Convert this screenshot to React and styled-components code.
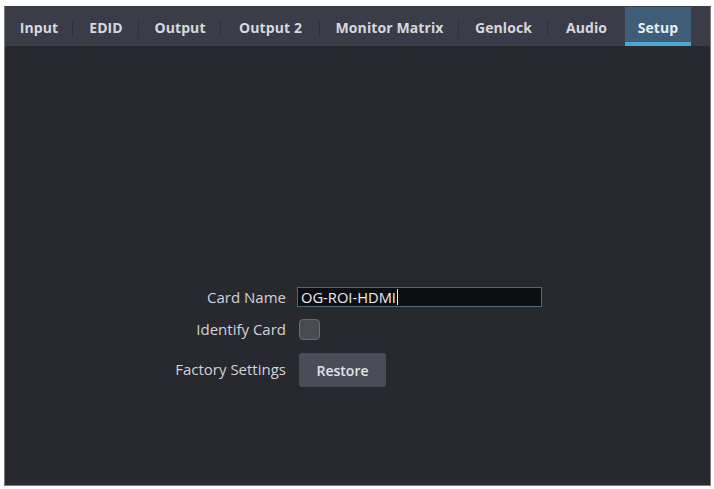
import React from "react";
import styled, { createGlobalStyle } from "styled-components";

const Global = createGlobalStyle`
  html, body { margin: 0; padding: 0; background: #ffffff; }
  body { font-family: "Open Sans", "DejaVu Sans", sans-serif; }
`;

const Frame = styled.div`
  margin: 6px 0 0 4px;
  width: 707px;
  height: 480px;
  box-sizing: border-box;
  border: 1px solid #7a7b80;
  border-top-color: #3b3e48;
  background: #28282f;
  display: flex;
  flex-direction: column;
`;

const TabBar = styled.div`
  height: 39px;
  background: #3a3d47;
  display: flex;
  align-items: stretch;
  flex-shrink: 0;
`;

const Tab = styled.div`
  position: relative;
  width: ${(p) => p.$w}px;
  display: flex;
  align-items: center;
  justify-content: center;
  padding-top: 2px;
  box-sizing: border-box;
  font-weight: 700;
  font-size: 14px;
  letter-spacing: 0.1px;
  color: ${(p) => (p.$active ? "#e4eef5" : "#d6d8dd")};
  background: ${(p) => (p.$active ? "#3f5d77" : "transparent")};
  box-shadow: ${(p) => (p.$active ? "inset 0 -4px 0 #4ea6d3" : "none")};
  &::after {
    content: "";
    display: ${(p) => (p.$sep ? "block" : "none")};
    position: absolute;
    right: 0;
    top: 13px;
    bottom: 9px;
    width: 1px;
    background: #30323b;
  }
`;

const Content = styled.div`
  flex: 1;
  padding: 241px 0 0 155px;
`;

const Form = styled.div`
  display: grid;
  grid-template-columns: 126px 245px;
  column-gap: 11px;
  row-gap: 11px;
  align-items: center;
`;

const Label = styled.div`
  justify-self: end;
  font-size: 15px;
  color: #d2d3d7;
  white-space: nowrap;
`;

const TextBox = styled.div`
  height: 20px;
  box-sizing: border-box;
  border: 1px solid #4a6a82;
  background: #0e0f12;
  display: flex;
  align-items: center;
  padding-left: 3px;
  font-size: 14.7px;
  color: #ececee;
`;

const Caret = styled.span`
  display: inline-block;
  width: 1px;
  height: 16px;
  background: #e8e8ea;
  margin-left: 1px;
`;

const Check = styled.div`
  width: 21px;
  height: 21px;
  box-sizing: border-box;
  margin-left: 2px;
  border-radius: 4px;
  border: 1px solid #6a6b72;
  background: #4a4b52;
  margin-top: 1px;
`;

const Button = styled.div`
  justify-self: start;
  margin-left: 2px;
  margin-top: 2px;
  width: 87px;
  height: 34px;
  box-sizing: border-box;
  border-radius: 3px;
  background: #4a4d56;
  display: flex;
  align-items: center;
  justify-content: center;
  font-size: 14px;
  font-weight: 600;
  color: #e2e3e6;
`;

const tabs = [
  { t: "Input", w: 68, sep: true },
  { t: "EDID", w: 66, sep: true },
  { t: "Output", w: 82, sep: true },
  { t: "Output 2", w: 99, sep: true },
  { t: "Monitor Matrix", w: 139, sep: true },
  { t: "Genlock", w: 89, sep: true },
  { t: "Audio", w: 77 },
  { t: "Setup", w: 66, active: true },
];

export default function App() {
  return (
    <>
      <Global />
      <Frame>
        <TabBar>
          {tabs.map((x) => (
            <Tab key={x.t} $w={x.w} $active={x.active} $sep={x.sep}>
              {x.t}
            </Tab>
          ))}
        </TabBar>
        <Content>
          <Form>
            <Label>Card Name</Label>
            <TextBox>
              OG-ROI-HDMI
              <Caret />
            </TextBox>
            <Label>Identify Card</Label>
            <Check />
            <Label>Factory Settings</Label>
            <Button>Restore</Button>
          </Form>
        </Content>
      </Frame>
    </>
  );
}
